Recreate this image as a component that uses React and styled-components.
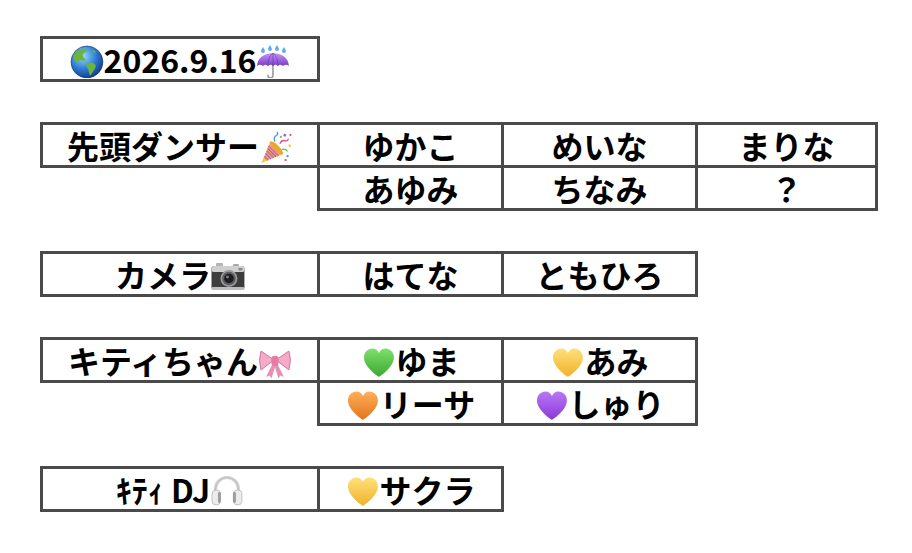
import React, { useId } from 'react';
import styled, { createGlobalStyle } from 'styled-components';

const GlobalStyle = createGlobalStyle`
  html, body { margin: 0; padding: 0; background: #ffffff; }
  body { font-family: "Noto Sans CJK JP", "Noto Sans", sans-serif; }
`;

const Page = styled.div`
  display: flex;
  flex-direction: column;
  align-items: flex-start;
  gap: 40px;
  padding: 36px 0 0 40px;
`;

const Table = styled.table`
  border-collapse: collapse;
  table-layout: fixed;
`;

const Cell = styled.td`
  width: ${(p) => p.$w}px;
  height: 40px;
  padding: 0;
  border: ${(p) => (p.$empty ? 'none' : '3px solid #4a4a4a')};
  text-align: center;
  vertical-align: middle;
  font-size: 32px;
  font-weight: 700;
  line-height: 40px;
  color: #000;
  white-space: nowrap;
`;

const Emoji = styled.svg`
  width: 1.06em;
  height: 1.06em;
  vertical-align: -0.17em;
`;

const Globe = () => {
  const id = useId();
  return (
    <Emoji viewBox="1 1 34 34" aria-label="🌎">
      <defs>
        <radialGradient id={id} cx="38%" cy="32%" r="72%">
          <stop offset="0" stopColor="#9ad8ff" />
          <stop offset="0.55" stopColor="#2f7ed6" />
          <stop offset="1" stopColor="#123a88" />
        </radialGradient>
      </defs>
      <circle cx="18" cy="18" r="16" fill={`url(#${id})`} />
      <path d="M6 9 C9 5 15 4 19 6 C18 8 15 8 14 10 C13 12 15 14 17 16 C15 17 13 17 11 16 C10 18 9 19 7 18 C4 15 4 12 6 9 Z" fill="#6bb43f" />
      <path d="M19 19 C22 18 26 19 27 22 C26 26 23 29 21 32 C20 29 20 26 18 23 C17 21 17 20 19 19 Z" fill="#6bb43f" />
      <path d="M23 6 C25 6 27 7 27 9 C25 9 24 8 23 6 Z" fill="#6bb43f" />
      <circle cx="18" cy="18" r="16" fill="none" stroke="#0f2f70" strokeWidth="0.6" />
    </Emoji>
  );
};

const drop = (x, y) =>
  `M${x} ${y - 3} Q${x + 2} ${y} ${x + 2} ${y + 1} A2 2 0 0 1 ${x - 2} ${y + 1} Q${x - 2} ${y} ${x} ${y - 3} Z`;

const Umbrella = () => {
  const id = useId();
  return (
    <Emoji viewBox="1 0 34 34" aria-label="☔">
      <defs>
        <linearGradient id={id} x1="0" y1="0" x2="0" y2="1">
          <stop offset="0" stopColor="#c596f2" />
          <stop offset="1" stopColor="#7b3cc9" />
        </linearGradient>
      </defs>
      <path d="M18 20 V30 Q18 33 15.5 33 Q13 33 13 30.5" fill="none" stroke="#9a9a9a" strokeWidth="1.6" strokeLinecap="round" />
      <path d="M2 21 Q3 9 18 8 Q33 9 34 21 Q31 18.5 28 21 Q25 18.5 23 21 Q20.5 18.5 18 21 Q15.5 18.5 13 21 Q10.5 18.5 8 21 Q5 18.5 2 21 Z" fill={`url(#${id})`} />
      <path d="M18 8 Q13 12 13 21 M18 8 Q23 12 23 21 M18 8 V21" fill="none" stroke="#6a2fb5" strokeWidth="0.6" />
      <path d={drop(8, 5)} fill="#5aaef0" />
      <path d={drop(15, 3)} fill="#5aaef0" />
      <path d={drop(22, 3)} fill="#5aaef0" />
      <path d={drop(29, 5)} fill="#5aaef0" />
    </Emoji>
  );
};

const Popper = () => (
  <Emoji viewBox="1 0 34 35" aria-label="🎉">
    <path d="M3 33 L12 11 L25 24 Z" fill="#f5c242" />
    <path d="M6 26 L10 30 M8.3 20.5 L15.5 27.7 M10.4 15.4 L20.6 25.6" stroke="#e36aa8" strokeWidth="2.2" />
    <path d="M7.2 23.2 L12.8 28.8 M9.4 18 L18 26.6" stroke="#9457d6" strokeWidth="1.2" />
    <ellipse cx="18.5" cy="17.5" rx="3" ry="9.2" transform="rotate(-45 18.5 17.5)" fill="#e9a630" />
    <path d="M17 11 Q15 7 18 5 Q21 3 19 1" fill="none" stroke="#4a8ee8" strokeWidth="1.3" />
    <path d="M22 13 Q24 9 27 10 Q30 11 31 8" fill="none" stroke="#e84a8a" strokeWidth="1.3" />
    <path d="M24 19 Q28 18 30 21" fill="none" stroke="#5cc25a" strokeWidth="1.3" />
    <rect x="26" y="3" width="2.5" height="2.5" fill="#9457d6" transform="rotate(20 27 4)" />
    <rect x="31" y="14" width="2.4" height="2.4" fill="#f5c242" />
    <rect x="22" y="5" width="2" height="2" fill="#5cc25a" />
    <circle cx="30" cy="26" r="1.2" fill="#4a8ee8" />
    <circle cx="33" cy="4" r="1.1" fill="#e84a8a" />
    <rect x="27" y="29" width="2" height="2" fill="#e84a8a" />
  </Emoji>
);

const Camera = () => (
  <Emoji viewBox="1 2 34 34" aria-label="📷">
    <rect x="6" y="5" width="7" height="4" rx="1" fill="#b5b5b5" />
    <rect x="23" y="6" width="6" height="3" rx="1" fill="#a8a8a8" />
    <rect x="1.5" y="8" width="33" height="24" rx="2.5" fill="#3c3c3c" />
    <rect x="1.5" y="8" width="33" height="6" rx="2" fill="#cfcfcf" />
    <rect x="1.5" y="29" width="33" height="3" rx="1.5" fill="#bdbdbd" />
    <circle cx="19" cy="20.5" r="8.5" fill="#9a9a9a" />
    <circle cx="19" cy="20.5" r="6.8" fill="#5d5d5d" />
    <circle cx="19" cy="20.5" r="4.8" fill="#1c1c1c" />
    <circle cx="17.5" cy="19" r="1.5" fill="#6f7f95" />
    <rect x="28.5" y="10" width="4" height="2.5" rx="0.6" fill="#8a8a8a" />
  </Emoji>
);

const Ribbon = () => (
  <Emoji viewBox="1 2 34 34" aria-label="🎀">
    <path d="M16 19 L9 33 L12.5 31.5 L14.5 34.5 L19 20 Z" fill="#e98fb3" />
    <path d="M20 19 L27 33 L23.5 31.5 L21.5 34.5 L17 20 Z" fill="#e98fb3" />
    <path d="M17 16 L4 7 Q1 16 4 26 Z" fill="#f5aac8" stroke="#d9709c" strokeWidth="1" />
    <path d="M19 16 L32 7 Q35 16 32 26 Z" fill="#f5aac8" stroke="#d9709c" strokeWidth="1" />
    <rect x="14.5" y="12" width="7" height="10" rx="2" fill="#e47ca6" />
  </Emoji>
);

const HEART =
  'M18 32 C18 32 3 22.5 3 12.5 C3 7 7 3.5 11.5 3.5 C14.5 3.5 17 5.5 18 8 C19 5.5 21.5 3.5 24.5 3.5 C29 3.5 33 7 33 12.5 C33 22.5 18 32 18 32 Z';

const Heart = ({ light, dark, label }) => {
  const id = useId();
  return (
    <Emoji viewBox="1 1 34 34" aria-label={label}>
      <defs>
        <linearGradient id={id} x1="0" y1="0" x2="0" y2="1">
          <stop offset="0" stopColor={light} />
          <stop offset="1" stopColor={dark} />
        </linearGradient>
      </defs>
      <path d={HEART} fill={`url(#${id})`} />
    </Emoji>
  );
};

const Headphones = () => (
  <Emoji viewBox="1 2 34 34" aria-label="🎧">
    <path d="M6.5 20 V16 A11.5 11.5 0 0 1 29.5 16 V20" fill="none" stroke="#d2d2d2" strokeWidth="3.2" />
    <path d="M6.5 20 V16 A11.5 11.5 0 0 1 29.5 16 V20" fill="none" stroke="#b0b0b0" strokeWidth="0.6" />
    <rect x="3" y="17" width="8.5" height="15" rx="4" fill="#ececec" stroke="#b8b8b8" strokeWidth="0.8" />
    <rect x="24.5" y="17" width="8.5" height="15" rx="4" fill="#ececec" stroke="#b8b8b8" strokeWidth="0.8" />
    <rect x="9" y="19" width="3" height="11" rx="1.5" fill="#9e9e9e" />
    <rect x="24" y="19" width="3" height="11" rx="1.5" fill="#9e9e9e" />
  </Emoji>
);

const W = [274, 181, 191, 177];

export default function App() {
  return (
    <>
      <GlobalStyle />
      <Page>
        <Table>
          <tbody>
            <tr>
              <Cell $w={W[0]}>
                <Globe />2026.9.16<Umbrella />
              </Cell>
            </tr>
          </tbody>
        </Table>

        <Table>
          <tbody>
            <tr>
              <Cell $w={W[0]}>先頭ダンサー<Popper /></Cell>
              <Cell $w={W[1]}>ゆかこ</Cell>
              <Cell $w={W[2]}>めいな</Cell>
              <Cell $w={W[3]}>まりな</Cell>
            </tr>
            <tr>
              <Cell $w={W[0]} $empty />
              <Cell $w={W[1]}>あゆみ</Cell>
              <Cell $w={W[2]}>ちなみ</Cell>
              <Cell $w={W[3]}>？</Cell>
            </tr>
          </tbody>
        </Table>

        <Table>
          <tbody>
            <tr>
              <Cell $w={W[0]}>カメラ<Camera /></Cell>
              <Cell $w={W[1]}>はてな</Cell>
              <Cell $w={W[2]}>ともひろ</Cell>
            </tr>
          </tbody>
        </Table>

        <Table>
          <tbody>
            <tr>
              <Cell $w={W[0]}>キティちゃん<Ribbon /></Cell>
              <Cell $w={W[1]}><Heart light="#7fe06a" dark="#3aa832" label="💚" />ゆま</Cell>
              <Cell $w={W[2]}><Heart light="#ffe07a" dark="#f0b22a" label="💛" />あみ</Cell>
            </tr>
            <tr>
              <Cell $w={W[0]} $empty />
              <Cell $w={W[1]}><Heart light="#ffb05a" dark="#e2731a" label="🧡" />リーサ</Cell>
              <Cell $w={W[2]}><Heart light="#b978f5" dark="#8a38d8" label="💜" />しゅり</Cell>
            </tr>
          </tbody>
        </Table>

        <Table>
          <tbody>
            <tr>
              <Cell $w={W[0]}>ｷﾃｨ DJ<Headphones /></Cell>
              <Cell $w={W[1]}><Heart light="#ffe07a" dark="#f0b22a" label="💛" />サクラ</Cell>
            </tr>
          </tbody>
        </Table>
      </Page>
    </>
  );
}
